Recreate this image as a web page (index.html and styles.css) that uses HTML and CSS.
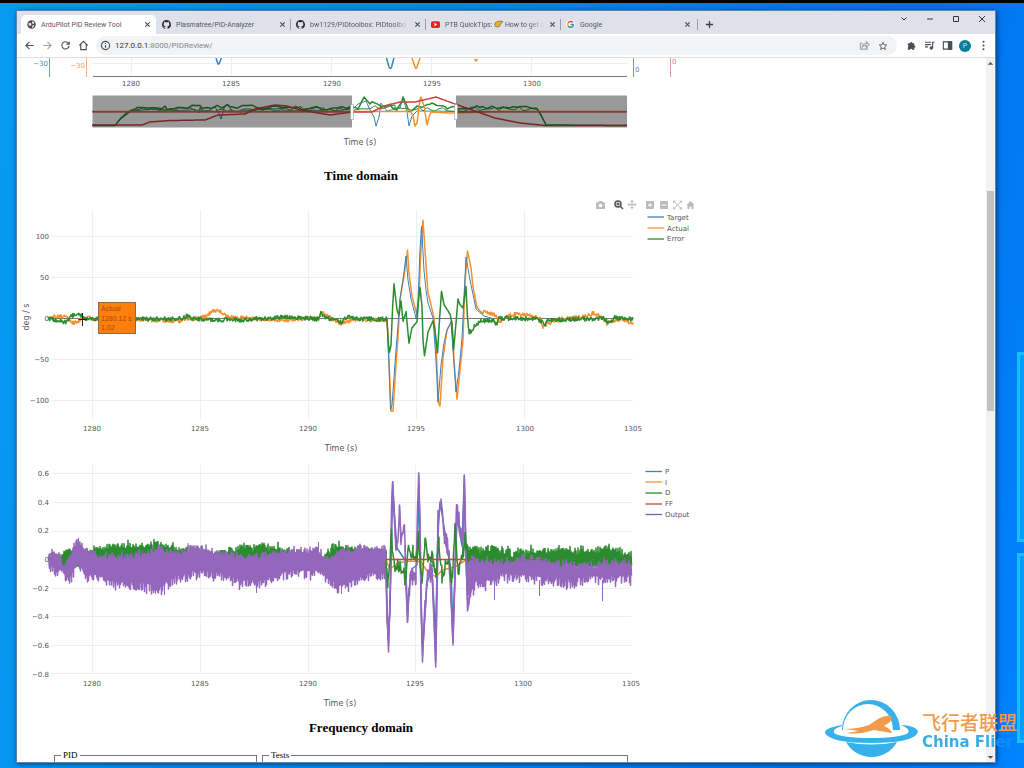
FILE: index.html
```html
<!DOCTYPE html>
<html lang="en">
<head>
<meta charset="utf-8">
<title>ArduPilot PID Review Tool</title>
<link rel="stylesheet" href="styles.css">
</head>
<body>
<svg class="defs" width="0" height="0" aria-hidden="true">
  <symbol id="close" viewBox="0 0 8 8"><path d="M1.5 1.5l5 5M6.5 1.5l-5 5" fill="none" stroke="currentColor" stroke-width="1.2"/></symbol>
  <symbol id="github" viewBox="0 0 16 16"><path fill="currentColor" d="M8 0C3.58 0 0 3.58 0 8c0 3.54 2.29 6.53 5.47 7.59.4.07.55-.17.55-.38 0-.19-.01-.82-.01-1.49-2.01.37-2.53-.49-2.69-.94-.09-.23-.48-.94-.82-1.13-.28-.15-.68-.52-.01-.53.63-.01 1.08.58 1.23.82.72 1.21 1.87.87 2.33.66.07-.52.28-.87.51-1.07-1.78-.2-3.64-.89-3.64-3.95 0-.87.31-1.59.82-2.15-.08-.2-.36-1.02.08-2.12 0 0 .67-.21 2.2.82A7.6 7.6 0 018 3.86c.68 0 1.36.09 2 .27 1.53-1.04 2.2-.82 2.2-.82.44 1.1.16 1.92.08 2.12.51.56.82 1.27.82 2.15 0 3.07-1.87 3.75-3.65 3.95.29.25.54.73.54 1.48 0 1.07-.01 1.93-.01 2.2 0 .21.15.46.55.38A8.01 8.01 0 0016 8c0-4.42-3.58-8-8-8z"/></symbol>
</svg>
<div class="desktop">
  <div class="pane pane-top"></div>
  <div class="pane pane-bottom"></div>
  <div class="window">
    <header class="tabstrip">
      <div class="tab tab-active">
        <svg class="favicon" viewBox="0 0 16 16"><circle cx="8" cy="8" r="7.5" fill="#4b4f54"/><path d="M2 6l4-1 2 2-1 3-3 0zM9 2l4 2-1 3-3-1zM9 10l4-1-1 3-3 2z" fill="#e8eaed"/></svg>
        <span class="tab-title">ArduPilot PID Review Tool</span>
        <button class="tab-close" aria-label="Close tab"><svg viewBox="0 0 8 8"><use href="#close"/></svg></button>
      </div>
      <div class="tab">
        <svg class="favicon" viewBox="0 0 16 16"><use href="#github"/></svg>
        <span class="tab-title">Plasmatree/PID-Analyzer</span>
        <button class="tab-close" aria-label="Close tab"><svg viewBox="0 0 8 8"><use href="#close"/></svg></button>
      </div>
      <div class="tab tab-line">
        <svg class="favicon" viewBox="0 0 16 16"><use href="#github"/></svg>
        <span class="tab-title fade">bw1129/PIDtoolbox: PIDtoolbo</span>
        <button class="tab-close" aria-label="Close tab"><svg viewBox="0 0 8 8"><use href="#close"/></svg></button>
      </div>
      <div class="tab tab-line">
        <svg class="favicon" viewBox="0 0 16 16"><rect y="2" width="16" height="12" rx="3" fill="#e5251d"/><path d="M6 5l5 3-5 3z" fill="#fff"/></svg>
        <span class="tab-title fade">PTB QuickTips: <svg class="hand" viewBox="0 0 16 14"><path d="M15 2H8L3 4 1 8l2 4h6l2-2V7l4-3z" fill="#e9ae2b" stroke="#66501d"/></svg> How to get d</span>
        <button class="tab-close" aria-label="Close tab"><svg viewBox="0 0 8 8"><use href="#close"/></svg></button>
      </div>
      <div class="tab tab-line">
        <svg class="favicon google" viewBox="0 0 16 16" fill="none" stroke-width="3"><rect width="16" height="16" rx="8" fill="#fff" stroke="none"/><path d="M3.6 5.5A5 5 0 0112 4.5" stroke="#ea4335"/><path d="M3.6 5.500a5 5 0 000 5" stroke="#fbbc05"/><path d="M3.600 10.500a5 5 0 008 1.200" stroke="#34a853"/><path d="M8 8h5a5 5 0 01-1.500 4" stroke="#4285f4"/></svg>
        <span class="tab-title">Google</span>
        <button class="tab-close" aria-label="Close tab"><svg viewBox="0 0 8 8"><use href="#close"/></svg></button>
      </div>
      <button class="new-tab tab-line" aria-label="New tab"><svg viewBox="0 0 10 10"><path d="M5 1v8M1 5h8" stroke="#3c4043" stroke-width="1.4"/></svg></button>
      <div class="window-buttons">
        <button aria-label="Search tabs"><svg viewBox="0 0 8 8"><path d="M1.500 2.500L4 5l2.500-2.500"/></svg></button>
        <button aria-label="Minimize"><svg viewBox="0 0 8 8"><path d="M1 4h6"/></svg></button>
        <button aria-label="Maximize"><svg viewBox="0 0 8 8"><path d="M1.500 1.500h5v5h-5z"/></svg></button>
        <button aria-label="Close"><svg viewBox="0 0 8 8"><path d="M1 1l6 6M7 1L1 7"/></svg></button>
      </div>
    </header>
    <nav class="toolbar">
      <button aria-label="Back"><svg viewBox="0 0 12 12"><path d="M10.500 6H2M6 2L2 6l4 4"/></svg></button>
      <button class="dim" aria-label="Forward"><svg viewBox="0 0 12 12"><path d="M1.500 6H10M6 2l4 4-4 4"/></svg></button>
      <button aria-label="Reload"><svg viewBox="0 0 12 12"><path d="M9.500 3.800A4 4 0 1010 6.500M10 1.500V4.500H7"/></svg></button>
      <button aria-label="Home"><svg viewBox="0 0 12 12"><path d="M1.500 6L6 1.500 10.500 6M3 5v5.500h6V5"/></svg></button>
      <div class="address">
        <svg viewBox="0 0 12 12"><circle cx="6" cy="6" r="4.500"/><path d="M6 5.500v3M6 3.200v1.200"/></svg>
        <span class="url"><b>127.0.0.1</b>:8000/PIDReview/</span>
        <svg viewBox="0 0 12 12" class="dim"><path d="M4 3.500H1.500V10H9V8M3.500 7.500C4 5 6 4 8 4V2l3 3-3 3V6C6 6 4.500 6.500 3.500 7.500z"/></svg>
        <svg class="star" viewBox="0 0 12 12"><path d="M6 1.500l1.300 3 3.200.3-2.400 2.200.7 3.200L6 8.500l-2.800 1.700.7-3.200-2.400-2.200 3.200-.3z"/></svg>
      </div>
      <button aria-label="Extensions"><svg viewBox="0 0 12 12"><path fill="#4b4f54" d="M2 3.500h2.500a1.200 1.200 0 112.500 0H9V6a1.200 1.200 0 110 2.500v2H6.800a1.300 1.300 0 00-2.500 0H2V8a1.300 1.300 0 000-2.300z" stroke="none"/></svg></button>
      <button aria-label="Media"><svg viewBox="0 0 12 12"><path d="M1 2.500h6.500M1 5h6.500M1 7.500h3.500M11.500 2.500H9.500v6"/><circle cx="8" cy="8.700" r="1.200" fill="#4b4f54"/></svg></button>
      <button aria-label="Side panel"><svg viewBox="0 0 12 12"><path d="M1.500 2h9v8h-9z"/><path d="M7 2h3.500v8H7z" fill="#4b4f54"/></svg></button>
      <button class="avatar" aria-label="Profile">P</button>
      <button aria-label="Menu"><svg viewBox="0 0 12 12"><g fill="#4b4f54" stroke="none"><circle cx="6" cy="2" r="1.100"/><circle cx="6" cy="6" r="1.100"/><circle cx="6" cy="10" r="1.100"/></g></svg></button>
    </nav>
    <div class="viewport">
      <main class="report">
        <svg class="chart" width="688" height="100" viewBox="17 58 688 100">
          <g class="grid"><path d="M131.500 58V76M231.500 58V76M331.500 58V76M431.500 58V76M531.500 58V76M93 63.500H627"/></g>
          <path d="M49.500 58V77" stroke="#6c9dcb" fill="none"/><path d="M86.500 58V77" stroke="#f5b27c" fill="none"/>
          <path d="M633.500 58V77" stroke="#75a878" fill="none"/><path d="M670.500 58V77" stroke="#e39a9e" fill="none"/>
          <path d="M93 76.500H627" stroke="#777" fill="none"/>
          <g class="trace"><path class="c-blue" d="M216 58L218 64H219L221.500 58M386.500 58L389 67Q390.500 70 391.500 67L394 58"/><path class="c-orange" d="M412 58L415 67Q416 70 417 67L420 58M474.500 59L476 61L477.500 59"/></g>
          <g class="tick end"><text class="t-blue" x="48" y="66">−30</text><text class="t-orange" x="85" y="68">−30</text></g>
          <g class="tick"><text class="t-green" x="635" y="72">0</text><text class="t-red" x="672" y="64">0</text></g>
          <g class="tick mid"><text x="131" y="86">1280</text><text x="231" y="86">1285</text><text x="332" y="86">1290</text><text x="432" y="86">1295</text><text x="532" y="86">1300</text></g>
          <g class="trace" id="overview"></g>
          <path d="M92.500 95.500H352V127.500H92.500zM456 95.500H627V127.500H456z" fill="#000" fill-opacity=".4"/>
          <path d="M350.500 104.500h3v15h-3zM454.500 104.500h3v15h-3z" fill="#fff" stroke="#888" stroke-width=".5"/>
          <text class="axis" x="360" y="145">Time (s)</text>
        </svg>
        <h2>Time domain</h2>
        <svg class="chart" width="688" height="264" viewBox="17 194 688 264">
          <g class="grid"><path d="M92.500 210V420M200.500 210V420M308.500 210V420M416.500 210V420M524.500 210V420M52 236.500H633M52 277.500H633M52 359.500H633M52 400.500H633"/></g>
          <path d="M49 318.500H633" stroke="#777" fill="none"/>
          <g class="trace" id="time"></g>
          <g class="tick end"><text x="49" y="239">100</text><text x="49" y="280">50</text><text x="49" y="321">0</text><text x="49" y="362">−50</text><text x="49" y="403">−100</text></g>
          <g class="tick mid"><text x="92" y="431">1280</text><text x="200" y="431">1285</text><text x="308" y="431">1290</text><text x="416" y="431">1295</text><text x="525" y="431">1300</text><text x="633" y="431">1305</text></g>
          <text class="axis" x="341" y="451">Time (s)</text>
          <text class="axis" transform="translate(29 317) rotate(-90)">deg / s</text>
          <path d="M82.500 313V326M78.500 319.500H87" stroke="#222" fill="none"/>
          <rect x="98.500" y="302.500" width="37" height="31" fill="#ff7f0e" stroke="#8a6a48"/>
          <g class="tip"><text x="101" y="311">Actual</text><text x="101" y="321">1280.12 s</text><text x="101" y="330">1.02</text></g>
          <g fill="#bbb">
            <path d="M596 202.500h2l1-1.500h3l1 1.500h2v6.500h-9z"/><circle cx="600.500" cy="205.500" r="1.800" fill="#fff"/>
            <g fill="none" stroke="#555" stroke-width="1.500"><circle cx="618" cy="204" r="3"/><path d="M620 206l3 3M616.500 204h3M618 202.500v3" /></g>
            <path d="M628 204.500h8M632 200.500v8" stroke="#bbb" fill="none"/><path d="M632 200l-2 2h4zM632 209l-2-2h4zM627.500 204.500l2-2v4zM636.500 204.500l-2-2v4z"/>
            <rect x="646" y="201" width="8" height="8" rx="1"/><path d="M648 205h4M650 203v4" stroke="#fff"/>
            <rect x="660" y="201" width="8" height="8" rx="1"/><path d="M661.500 205h5" stroke="#fff"/>
            <path d="M673.500 201l8 8M681.500 201l-8 8M673.500 203v-2h2M681.500 203v-2h-2M673.500 207v2h2M681.500 207v2h-2" stroke="#bbb" fill="none"/>
            <path d="M686.500 205l4-4 4 4h-1v4h-2v-2.500h-2V209h-2v-4z"/>
          </g>
          <g class="key"><path d="M647.500 217H664" class="c-blue"/><path d="M647.500 228H664" class="c-orange"/><path d="M647.500 239H664" class="c-green"/></g>
          <g class="legend"><text x="667" y="220">Target</text><text x="667" y="231">Actual</text><text x="667" y="241">Error</text></g>
        </svg>
        <svg class="chart" width="688" height="252" viewBox="17 458 688 252">
          <g class="grid"><path d="M92.500 465V674M200.500 465V674M308.500 465V674M415.500 465V674M523.500 465V674M52 473.500H631M52 502.500H631M52 531.500H631M52 588.500H631M52 616.500H631M52 645.500H631M52 673.500H631"/></g>
          <g class="trace" id="outputs"></g>
          <g class="tick end"><text x="49" y="476">0.6</text><text x="49" y="505">0.4</text><text x="49" y="533">0.2</text><text x="49" y="562">0</text><text x="49" y="591">−0.2</text><text x="49" y="619">−0.4</text><text x="49" y="648">−0.6</text><text x="49" y="677">−0.8</text></g>
          <g class="tick mid"><text x="92" y="686">1280</text><text x="200" y="686">1285</text><text x="308" y="686">1290</text><text x="415" y="686">1295</text><text x="523" y="686">1300</text><text x="631" y="686">1305</text></g>
          <text class="axis" x="340" y="706">Time (s)</text>
          <g class="key"><path d="M645.500 471.500H662" class="c-blue"/><path d="M645.500 482H662" class="c-orange"/><path d="M645.500 493H662" class="c-green"/><path d="M645.500 504H662" class="c-red"/><path d="M645.500 514.500H662" class="c-output"/></g>
          <g class="legend"><text x="665" y="474">P</text><text x="665" y="485">I</text><text x="665" y="495">D</text><text x="665" y="506">FF</text><text x="665" y="517">Output</text></g>
        </svg>
        <h2>Frequency domain</h2>
        <div class="panels">
          <fieldset><legend>PID</legend></fieldset>
          <fieldset><legend>Tests</legend></fieldset>
        </div>
      </main>
      <div class="scrollbar">
        <svg viewBox="0 0 8 8"><path d="M1.500 5.500L4 3l2.500 2.500z" fill="#555"/></svg>
        <div class="track"><div class="thumb"></div></div>
        <svg viewBox="0 0 8 8"><path d="M1.500 3L4 5.500 6.500 3z" fill="#555"/></svg>
      </div>
    </div>
  </div>
  <div class="watermark">
    <svg viewBox="0 0 96 62">
      <path d="M18 32A29 30 0 1176 32H69A25 26 0 0019 32z" fill="#37b1e9"/>
      <path d="M22 44Q47 49 73 44A29 29 0 0122 44z" fill="#37b1e9"/>
      <path d="M18 27Q0 30 1 35Q6 45 47 45Q90 45 94 34Q93 28 77 27Q87 31 84 35Q76 40 47 40Q17 40 10 35Q8 31 18 28z" fill="#37b1e9"/>
      <path d="M20 31Q34 31 45 27L54 21Q62 17 67 18Q69 20 66 24L60 28Q67 31 68 35L50 32Q34 37 23 35L35 33z" fill="#f19a4b"/>
    </svg>
    <div class="watermark-text"><span class="cn">飞行者联盟</span><span class="en">China Flier</span></div>
  </div>
</div>
<script src="charts.js"></script>
</body>
</html>
```

FILE: styles.css
```css
* { box-sizing: border-box; }
body { margin: 0; font-family: Roboto, "Noto Sans", sans-serif; }
button { border: 0; padding: 0; background: none; display: flex; align-items: center; justify-content: center; }
.defs { position: absolute; }
.desktop {
  position: relative;
  height: 100vh;
  padding: 7px 28px 5px 16px;
  overflow: hidden;
  border-top: 3px solid #000;
  background: linear-gradient(100deg, #069bf3 0%, #0587e8 45%, #0072e8 80%, #0084ff 100%);
}
.pane { position: absolute; right: -4px; width: 11px; border: 3px solid #16bfff; background: #079dff; }
.pane-top { top: 349px; height: 190px; }
.pane-bottom { top: 550px; height: 190px; }
.window {
  position: relative;
  display: flex;
  flex-direction: column;
  height: 100%;
  background: #fff;
  border: 1px solid #5b87ad;
  box-shadow: 1px 1px 5px #003a7c;
}
.tabstrip { display: flex; height: 23px; flex: none; padding: 4px 0 0 4px; background: #dee1e9; color: #3c4043; }
.tab { display: flex; align-items: center; width: 135px; height: 19px; padding: 0 5px 0 6px; gap: 5px; font-size: 7px; }
.tab-active { background: #fff; border-radius: 5px 5px 0 0; }
.tab-line::before { content: ""; width: 1px; height: 11px; margin: 0 0 0 -7px; background: #9a9ea5; }
.favicon { width: 9px; height: 9px; flex: none; color: #24292f; }
.tab-title { flex: 1; min-width: 0; overflow: hidden; white-space: nowrap; color: #55595e; }
.fade { mask-image: linear-gradient(90deg, #000 85%, transparent); }
.hand { width: 9px; height: 8px; vertical-align: -1px; }
.tab-close svg { width: 7px; height: 7px; display: block; color: #44484d; }
.new-tab { width: 26px; height: 19px; gap: 7px; }
.new-tab svg { width: 9px; }
.window-buttons { display: flex; margin-left: auto; margin-top: -4px; height: 16px; }
.window-buttons button { width: 26px; }
.window-buttons svg { width: 8px; fill: none; stroke: #33373c; }
.toolbar { display: flex; align-items: center; height: 24px; flex: none; padding: 0 3px; border-bottom: 1px solid #dcdee2; }
.toolbar > button { width: 18px; height: 18px; flex: none; }
.toolbar svg { width: 11px; height: 11px; flex: none; fill: none; stroke: #4b4f54; stroke-width: 1.2; }
.toolbar .star { width: 10px; height: 10px; stroke-width: 1; margin: 0 5px 0 1px; }
.toolbar .dim svg, .toolbar svg.dim { stroke: #a0a3a8; }
.address { display: flex; align-items: center; flex: 1; gap: 7px; height: 19px; margin: 0 5px 0 4px; padding: 0 4px; border-radius: 10px; background: #f1f3f4; font-size: 8px; }
.address .url { flex: 1; margin-left: -3px; color: #85898e; }
.address b { font-weight: 400; color: #303338; }
.toolbar > .avatar { width: 12px; height: 12px; margin: 0 3px; border-radius: 50%; background: #087f96; color: #cdf; font: 7px Roboto, sans-serif; }
.viewport { display: flex; flex: 1; min-height: 0; overflow: hidden; }
.report { flex: 1; min-width: 0; overflow: hidden; }
.chart { display: block; }
.report h2 { max-width: 688px; margin: 0; font: bold 13px/36px "Liberation Serif", serif; text-align: center; color: #000; }
.grid { fill: none; stroke: #eee; }
.trace { fill: none; stroke-width: 1.5; stroke-linejoin: round; }
.key { fill: none; stroke-width: 1.3; }
.c-blue { stroke: #3c82b8; }
.c-orange { stroke: #f5912f; }
.c-green { stroke: #2a8c2e; }
.c-red { stroke: #c9413f; }
.c-purple { stroke: #9467bd; }
.c-output { stroke: #7f62a0; }
.f-purple { fill: #9467bd; }
.thin { stroke-width: 1; }
.tick, .legend { font: 7px "DejaVu Sans", sans-serif; fill: #555; }
.t-blue { fill: #4c86b8; }
.t-orange { fill: #f5a15e; }
.t-green { fill: #5a9a5e; }
.t-red { fill: #d98488; }
.end { text-anchor: end; }
.mid { text-anchor: middle; }
.axis { font: 8px "DejaVu Sans", sans-serif; fill: #555; text-anchor: middle; }
.tip { font: 7px "Liberation Sans", sans-serif; fill: #9c4d0c; }
.panels { display: grid; grid-template-columns: 203fr 366fr; gap: 5px; max-width: 611px; margin-top: 3px; padding-left: 37px; }
.panels fieldset { margin: 0; padding: 0 6px; height: 60px; border: 1px solid #777; min-width: 0; font: 9px/12px "Liberation Serif", serif; }
.panels legend { padding: 0 2px; }
.scrollbar { display: flex; flex-direction: column; width: 9px; flex: none; background: #f1f1f1; }
.scrollbar svg { width: 9px; height: 10px; display: block; }
.track { flex: 1; padding: 123px 1px 0; }
.thumb { height: 220px; background: #c1c1c1; }
.watermark { position: absolute; right: 6px; bottom: 8px; display: flex; align-items: center; }
.watermark > svg { width: 96px; height: 62px; }
.watermark-text { display: flex; flex-direction: column; width: 98px; padding: 6px 0 0 2px; white-space: nowrap; }
.cn { font: 500 19px/20px "Noto Sans CJK SC", sans-serif; color: #f09a50; }
.en { font: bold 15px/20px "DejaVu Sans", sans-serif; color: transparent; background: linear-gradient(90deg, #35aee8 74%, #108cf5 78%); background-clip: text; -webkit-background-clip: text; }
```

FILE: charts.js
```js
let seed = 71;
function rnd() {
  seed = (seed * 16807) % 2147483647;
  return seed / 2147483647;
}

function add(id, cls, d) {
  const p = document.createElementNS("http://www.w3.org/2000/svg", "path");
  p.setAttribute("class", cls);
  p.setAttribute("d", d);
  document.getElementById(id).appendChild(p);
}

// Linear interpolation of column k through sorted rows.
function at(rows, x, k) {
  for (let i = 1; i < rows.length; i++) {
    if (x <= rows[i][0]) {
      const a = rows[i - 1], b = rows[i];
      return a[k] + (b[k] - a[k]) * (x - a[0]) / (b[0] - a[0]);
    }
  }
  return rows[rows.length - 1][k];
}

// A line through the points with noise of the given amplitude.
function line(str, amp, step = 1) {
  const pts = str.trim().split(/\s+/).map(p => p.split(",").map(Number));
  let d = "";
  const end = pts[pts.length - 1][0];
  const xs = pts.map(p => p[0]);
  for (let x = pts[0][0]; x < end; x += step) xs.push(x);
  xs.sort((a, b) => a - b);
  for (const x of xs) {
    const a = typeof amp === "function" ? amp(x) : amp;
    d += (d ? "L" : "M") + x.toFixed(1) + " " + (at(pts, x, 1) + (rnd() - 0.5) * 2 * a).toFixed(1);
  }
  return d;
}

// Overview strip
const calm = x => (x > 135 && x < 535 ? 2 : 0);
add("overview", "c-blue thin", line("130,111.500 140,110 210,110 215,107 219,114 221,119 224,108 228,104 232,112 240,110 352,110 358,104 366,101 371,112 374,117 376,126 379,117 381,103 387,111 400,108 403,98 407,112 409,126 412,116 417,111 500,111.500", x => x > 135 && x < 350 ? 1 : 0, 4));
add("overview", "c-green", line("92,125.500 115,125.500 121,118 128,112 136,108 165,108 200,107 230,106 270,108 300,109 352,107 358,110 364,98 370,103 390,106 397,109 403,98 409,110 430,104 445,107 456,108 480,107 510,107 537,109 541,115 546,125 627,125.500", calm, 5));
add("overview", "c-green thin", line("115,125 122,118 130,112 140,109 200,110 240,111 300,108 352,110 395,106 420,110 456,110 537,108 546,125", x => x > 140 && x < 535 ? 2.500 : 0, 4));
add("overview", "c-orange", "M92 111.500H405L410 110L413 116L415 126L417 123L420 100L421 97L424 106L427 125L429 117L431 112L450 113L500 111.500H627");
add("overview", "c-red thin", "M92 112H352M456 112H627");
add("overview", "c-red", line("92,125 142,125 150,122 170,120.500 205,120 218,115 245,114 255,109 275,105 287,106 300,110 318,113 330,115 352,112 372,112 384,106 400,102 415,102 436,97 455,104 475,111 495,118 520,123 545,125.500 627,125.500", 0));

// Time domain
const quiet = x => (x < 387 || x > 482 ? 2 : 0.3);
const pulses = "387,319 389,360 391,411 393,411 396,365 398,337 400,300 402,287 404,276 406,263 407.500,250 409,273 412,296 417,315 419,295 421,248 423,220 425,250 428,293 434,317 436,345 438.500,403 440,406 443,358 447,330 452,321 454,360 457,399 460,370 463,340 465,282 467.500,251 471,268 473,287 477,307 481,312 490,313";
add("time", "c-orange", line("49,319 58,316 66,317 73,323 78,321 82,318 110,319 180,321 205,317 210,313 214,310 221,312 227,317 260,319 285,320 308,318 319,318 321,311 325,315 333,319 341,324 352,320 387,320 " + pulses + " 496,315 499,323 506,317 515,314 530,316 540,318 543,327 551,322 560,319 583,317 594,313 603,318 607,324 620,319 633,323", quiet, 0.7));
add("time", "c-blue thin", line("387,319 389,366 390.500,410 392,405 396,350 398,325 400,299 403,280 406,256 408,280 411,299 416,318 418,301 420,250 421.500,226 424,270 426,290 428,303 433,318 436,360 438,402 441,365 444,343 447,330 451,322 453,350 456,392 459,370 462,338 466,257 470,280 476,309 484,316 494,319", 0));
add("time", "c-green", line("49,319 60,321 66,322 73,315 79,314 85,319 110,319 180,319 187,316 193,319 240,320 285,317 318,319 321,313 325,317 341,322 348,317 355,319 387,319 388.500,345 389.500,352 391,345 392.500,310 394,284 397,310 399,315 401,301 403,321 406,312 409,343 412,328 417,322 418.500,300 420,287 422,307 423,340 424.500,356 428,332 433,321 435,330 437.500,353 439.500,320 441.500,291 444,305 450,314 452,324 453.500,350 455,335 458,299 460,305 463,308 466,286 467.500,319 469,333 474,327 481,321 494,321 497,325 499,318 535,319 541,321 544,325 548,320 585,319 604,318 608,322 615,318 633,319", x => x < 387 || x > 466 ? 2.200 : 0.4, 0.6));

// PID outputs: x, green top, purple top, purple bottom
const bands = [
  [49, 553, 552, 571], [60, 555, 553, 576], [63, 554, 563, 577], [70, 549, 559, 582], [76, 552, 542, 572], [79, 552, 541, 567],
  [84, 552, 548, 580], [100, 548, 556, 581], [115, 545, 557, 588], [135, 546, 556, 588], [160, 544, 549, 592], [180, 549, 554, 580],
  [190, 550, 547, 577], [215, 553, 552, 577], [240, 548, 557, 586], [260, 545, 555, 587], [280, 548, 553, 580], [288, 552, 550, 576],
  [318, 554, 550, 577], [323, 556, 558, 580], [333, 546, 556, 588], [345, 546, 550, 590], [365, 550, 548, 580], [386, 552, 549, 577]
];
const after = [
  [467, 549, 566, 600], [472, 549, 555, 595], [476, 549, 561, 586], [495, 548, 562, 586], [500, 551, 563, 579], [525, 551, 558, 581],
  [540, 550, 560, 583], [570, 551, 564, 585], [595, 550, 566, 582], [602, 548, 562, 583], [615, 550, 562, 582], [631, 552, 562, 581]
];
function band(rows, green) {
  const x0 = rows[0][0], x1 = rows[rows.length - 1][0];
  let d = "";
  for (let x = x0; x <= x1; x += 1) {
    const spike = rnd() > 0.75 ? 12 : 6;
    const top = at(rows, x, green ? 1 : 2) - (rnd() - 0.55) * spike;
    const bottom = green ? 566 : at(rows, x, 3) + (rnd() - 0.75) * spike * 1.5;
    d += (d ? "L" : "M") + x.toFixed(1) + " " + top.toFixed(1) + "L" + (x + 0.5).toFixed(1) + " " + bottom.toFixed(1);
  }
  return d;
}
// Solid middle of the output band, where the oscillation hides the background.
function core(rows) {
  const top = rows.map(r => r[0] + " " + (r[2] + 3));
  const bottom = rows.map(r => r[0] + " " + (r[3] - 6)).reverse();
  return "M" + top.concat(bottom).join("L") + "Z";
}
add("outputs", "c-green", band(bands, true));
add("outputs", "c-green", band(after, true));
for (const rows of [bands, after]) {
  add("outputs", "f-purple", core(rows));
  add("outputs", "c-purple", band(rows, false));
}
add("outputs", "c-purple thin", "M155.500 580V594M164.500 580V595M256.500 580V593M341.500 580V594M494.500 580V600M539.500 580V596M602.500 580V601M78.500 545V538M318.500 555V542M188 550V543");

const swing = "386,572 387,620 388.500,645 390,610 391.500,510 392.700,481 394,510 396,550 398,540 399.500,506 401,540 404.500,525 405.500,560 407.500,622 409,590 412,578 416,572 417.500,510 418.700,475 420,520 421.500,620 422.500,655 424,630 427,580 432,569 433.500,605 435.700,660 437,600 438.500,520 441,501 444,530 449,550 451,600 453,642 454.500,590 456,520 457,513 460,525 463,545 464.300,475 466,560 468,605 471,590";
add("outputs", "c-blue", "M386 570L388 639L390 610L392.500 490L394 510L397 548L405 560L407 611L409 590L412 569L417 565L419 485L421 600L422 644L424 630L427 583L432 569L435.500 635L438 530L440 502L443 520L447 546L451 570L453 632L457 516L462 546L464 485L467 590");
add("outputs", "c-orange", "M386 560L390 569L398 563L410 561L421 562L427 571L436 577L442 570L455 567L466 560");
add("outputs", "c-purple", line(swing, x => x > 409 && x < 417 || x > 425 && x < 432 || x > 456 && x < 463 || x > 443 && x < 450 ? 12 : 3, 0.5));
add("outputs", "c-purple", "M386 572L388.500 652L391 560L392.700 482L396 545M399.500 506L401 545M405 545L407.500 622L409 590M418.700 475L422.500 662L425 600M432 570L435.700 667L438 510M449 550L453 642L457 513M463 540L464.300 475L467.500 611L471 590");
add("outputs", "c-green", line("386,560 388,582 390,560 391.500,530 393,555 396,570 400,563 405,577 408,552 413,553 417,555 418.500,536 420,560 422,580 425,537 428,555 433,560 436,575 439,543 442,575 448,560 452,580 455,530 458,572 463,555 465,540 469,557", 8, 0.9));
add("outputs", "c-red", "M386 559.500H466");
add("outputs", "c-red thin", "M470 559.500H473M528 559.500H536M540 559.500H544M556 559.500H562M570 559.500H577M591 559.500H595M604 559.500H609M622 559.500H631");
```
